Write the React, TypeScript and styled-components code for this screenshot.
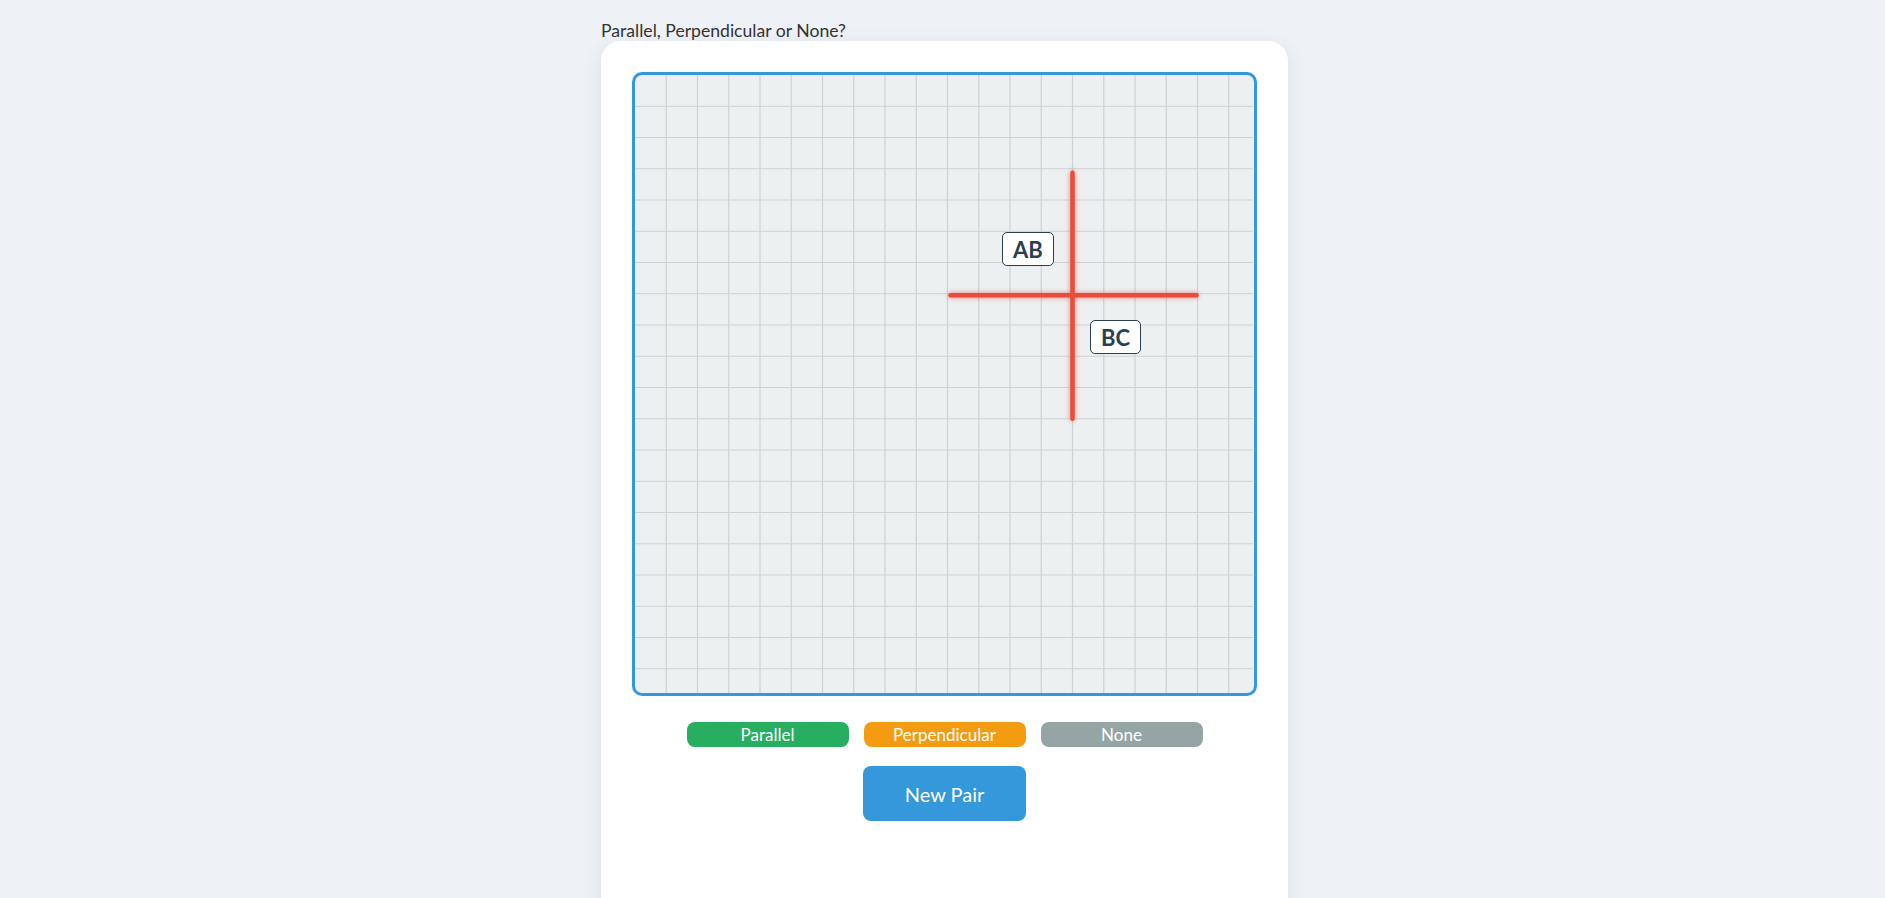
import React, { useState } from 'react';
import styled, { createGlobalStyle } from 'styled-components';

const CELL = 31.25;
const BOARD = 618;

const GlobalStyle = createGlobalStyle`
  body {
    margin: 0;
    background-color: #eef2f7;
    font-family: Lato, 'Open Sans', sans-serif;
    color: #333;
  }
`;

const Wrapper = styled.div`
  width: 687px;
  margin: 0 auto;
  padding: 20px 0 0 4px;
`;

const Title = styled.div`
  margin: 0;
  font-size: 17.6px;
  line-height: 21px;
  color: #333;
`;

const Card = styled.div`
  display: flex;
  flex-direction: column;
  align-items: center;
  padding: 31px 31px 140px;
  background-color: #fff;
  border-radius: 20px;
  box-shadow: 0 4px 20px rgba(0, 0, 0, 0.08);
`;

const Board = styled.div`
  position: relative;
  width: 625px;
  height: 624px;
  box-sizing: border-box;
  border: 3px solid #3498db;
  border-radius: 10px;
  background-color: #ecf0f1;
  overflow: hidden;
`;

const Label = styled.div<{ x: number; y: number }>`
  position: absolute;
  left: ${(p) => p.x}px;
  top: ${(p) => p.y}px;
  height: 34px;
  box-sizing: border-box;
  padding: 0 10px;
  display: flex;
  align-items: center;
  border: 1px solid #2c3e50;
  border-radius: 5px;
  background-color: #fff;
  color: #2c3e50;
  font-size: 22px;
  font-weight: 700;
`;

const AnswerRow = styled.div`
  display: flex;
  gap: 15px;
  margin-top: 26px;
`;

const AnswerBtn = styled.button<{ color: string }>`
  width: 162px;
  height: 25px;
  padding: 0;
  border: 0;
  border-radius: 8px;
  background-color: ${(p) => p.color};
  color: #fff;
  font-family: inherit;
  font-size: 17px;
  line-height: 25px;
  cursor: pointer;
`;

const NewPairBtn = styled.button`
  width: 163px;
  height: 55px;
  margin-top: 19px;
  border: 0;
  border-radius: 8px;
  background-color: #3498db;
  color: #fff;
  font-family: inherit;
  font-size: 20px;
  cursor: pointer;
`;

const Segment = styled.line`
  stroke: #e74c3c;
  stroke-width: 4.5;
  stroke-linecap: round;
  filter: drop-shadow(0 0 2.5px rgba(231, 76, 60, 0.7));
`;

function App() {
  const [answer, setAnswer] = useState('');
  const lines = Array.from({ length: 19 }, (_, i) => (i + 1) * CELL);

  return (
    <>
      <GlobalStyle />
      <Wrapper>
        <Title>Parallel, Perpendicular or None?</Title>
        <Card>
          <Board>
            <svg width={BOARD} height={BOARD} viewBox={`0 0 ${BOARD} ${BOARD}`}>
              {lines.map((v) => (
                <g key={v}>
                  <line x1={v} y1={0} x2={v} y2={BOARD} stroke="#cdd2d4" strokeWidth={1.2} />
                  <line x1={0} y1={v} x2={BOARD} y2={v} stroke="#cdd2d4" strokeWidth={1.2} />
                </g>
              ))}
              <Segment x1={10 * CELL + 3} y1={7 * CELL + 1.5} x2={18 * CELL - 1} y2={7 * CELL + 1.5} />
              <Segment x1={14 * CELL} y1={3 * CELL + 4} x2={14 * CELL} y2={11 * CELL} />
            </svg>
            <Label x={367} y={157}>AB</Label>
            <Label x={455} y={245}>BC</Label>
          </Board>
          <AnswerRow>
            <AnswerBtn color="#27ae60" onClick={() => setAnswer('Parallel')}>
              Parallel
            </AnswerBtn>
            <AnswerBtn color="#f39c12" onClick={() => setAnswer('Perpendicular')}>
              Perpendicular
            </AnswerBtn>
            <AnswerBtn color="#95a5a6" onClick={() => setAnswer('None')}>
              None
            </AnswerBtn>
          </AnswerRow>
          <NewPairBtn type="button" onClick={() => setAnswer('')}>
            New Pair
          </NewPairBtn>
          {answer && null}
        </Card>
      </Wrapper>
    </>
  );
}

export default App;
